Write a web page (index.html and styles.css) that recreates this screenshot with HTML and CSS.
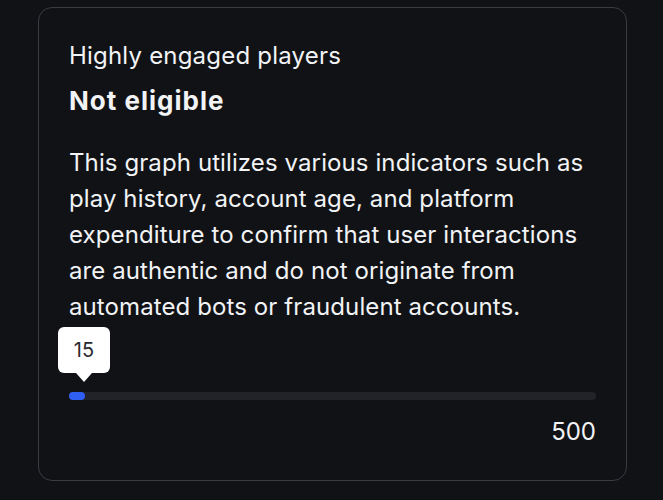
FILE: index.html
```html
<!DOCTYPE html>
<html>
<head>
<meta charset="utf-8">
<link rel="stylesheet" href="styles.css">
</head>
<body>
<div class="card">
  <div class="label">Highly engaged players</div>
  <div class="status">Not eligible</div>
  <p class="desc">This graph utilizes various indicators such as play history, account age, and platform expenditure to confirm that user interactions are authentic and do not originate from automated bots or fraudulent accounts.</p>
  <div class="meter">
    <div class="tip">15</div>
    <div class="track"><div class="fill" style="width: 16px"></div></div>
    <div class="max">500</div>
  </div>
</div>
</body>
</html>
```
FILE: styles.css
```css
html, body { margin: 0; padding: 0; background: #111216; }
body { font-family: "Inter", "Noto Sans", sans-serif; color: #f2f3f5; padding: 7px 36px 19px 38px; }
.card {
  border: 1.5px solid #3b3c42;
  border-radius: 14px;
  height: 474px;
  box-sizing: border-box;
  padding: 29.5px 30px 0 30px;
}
.label { font-size: 24px; line-height: 36px; letter-spacing: 0.2px; }
.status { font-size: 26px; font-weight: 700; line-height: 36px; margin-top: 9px; letter-spacing: 1px; }
.desc { font-size: 24px; line-height: 36px; margin: 26px 0 0; letter-spacing: 0.1px; }
.meter { margin-top: 2px; }
.tip {
  position: relative;
  background: #fff;
  color: #2a2b30;
  font-size: 20px;
  width: 52px; height: 46px; line-height: 46px;
  text-align: center;
  border-radius: 6px;
  margin-left: -11px;
}
.tip::after {
  content: ""; position: absolute; left: 50%; bottom: -9px; margin-left: -8px;
  border-left: 8px solid transparent; border-right: 8px solid transparent; border-top: 9px solid #fff;
}
.track { height: 8px; background: #222329; border-radius: 4px; margin-top: 19px; }
.fill { height: 8px; background: #2f5ef2; border-radius: 4px; }
.max { text-align: right; font-size: 24px; line-height: 36px; margin-top: 14px; }
```
